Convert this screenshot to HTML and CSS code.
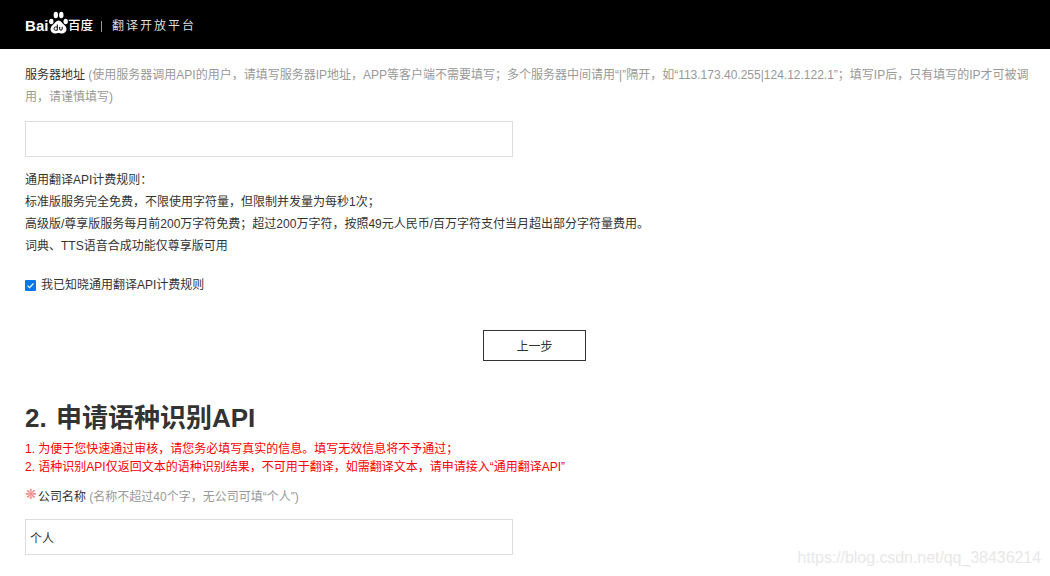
FILE: index.html

```html
<!DOCTYPE html>
<html>
<head>
  <title>百度翻译开放平台</title>
  <link rel="stylesheet" href="styles.css">
</head>
<body>
  <div class="header">
    <div class="logo">
      <span class="logo-bai">Bai</span>
      <svg class="logo-paw" width="19" height="23" viewBox="0 0 19 23">
        <ellipse cx="2.300" cy="10.500" rx="2.200" ry="2.800" fill="#fff"/>
        <ellipse cx="6.800" cy="4" rx="2.200" ry="3.200" fill="#fff"/>
        <ellipse cx="12.300" cy="4" rx="2.200" ry="3.200" fill="#fff"/>
        <ellipse cx="16.700" cy="10.500" rx="2.200" ry="2.800" fill="#fff"/>
        <path d="M9.500 9.500c-2.500 0-3 2.300-5 3.800C2.300 14.900 1.500 16.500 1.500 18.300c0 2.700 2.200 4.200 4.500 4.200 1.500 0 2.300-.5 3.500-.5s2 .5 3.500.5c2.300 0 4.500-1.500 4.500-4.200 0-1.800-.8-3.400-3-5-2-1.500-2.500-3.800-5-3.800z" fill="#fff"/>
        <path d="M8.300 13.500v5.700H6.500c-1 0-1.500-.7-1.500-1.600s.6-1.600 1.500-1.600h1.800M10.700 15.800v2.200c0 .8.500 1.200 1.200 1.200s1.300-.4 1.300-1.200v-2.200" fill="none" stroke="#000" stroke-width="1"/>
      </svg>
      <span class="logo-du">百度</span>
      <span class="logo-line"></span>
      <span class="logo-name">翻译开放平台</span>
    </div>
  </div>

  <div class="content">
    <p class="field-label">服务器地址 <span class="hint">(使用服务器调用API的用户，请填写服务器IP地址，APP等客户端不需要填写；多个服务器中间请用“|”隔开，如“113.173.40.255|124.12.122.1”；填写IP后，只有填写的IP才可被调用，请谨慎填写)</span></p>
    <input class="text-input server-input" type="text">

    <div class="rules">
      <div>通用翻译API计费规则：</div>
      <div>标准版服务完全免费，不限使用字符量，但限制并发量为每秒1次；</div>
      <div>高级版/尊享版服务每月前200万字符免费；超过200万字符，按照49元人民币/百万字符支付当月超出部分字符量费用。</div>
      <div>词典、TTS语音合成功能仅尊享版可用</div>
    </div>

    <label class="agree">
      <span class="check">
        <svg width="11" height="11" viewBox="0 0 11 11"><path d="M2.500 5.700l2 2 4-4.200" fill="none" stroke="#fff" stroke-width="1.200"/></svg>
      </span>
      我已知晓通用翻译API计费规则
    </label>

    <div class="actions">
      <button class="btn" type="button">上一步</button>
    </div>

    <h2 class="section-title">2. 申请语种识别API</h2>
    <div class="notice">
      <div>1. 为便于您快速通过审核，请您务必填写真实的信息。填写无效信息将不予通过；</div>
      <div>2. 语种识别API仅返回文本的语种识别结果，不可用于翻译，如需翻译文本，请申请接入“通用翻译API”</div>
    </div>

    <p class="field-label company-label"><span class="star">❋</span>公司名称 <span class="hint">(名称不超过40个字，无公司可填“个人”)</span></p>
    <input class="text-input company-input" type="text" value="个人">
  </div>

  <div class="watermark">https://blog.csdn.net/qq_38436214</div>
</body>
</html>
```

FILE: styles.css

```css
html, body {
  height: 576px;
  overflow: hidden;
}
body {
  margin: 0;
  background: #fff;
  color: #333;
  font-family: "Liberation Sans", "Noto Sans CJK SC", sans-serif;
  font-size: 12px;
  line-height: 22px;
}
.header {
  height: 49px;
  box-sizing: border-box;
  padding: 3px 0 0 25px;
  background: #000;
  display: flex;
  align-items: center;
}
.logo {
  display: flex;
  align-items: center;
  color: #fff;
}
.logo-bai {
  font-size: 15px;
  font-weight: bold;
  letter-spacing: .1px;
  width: 24px;
}
.logo-paw {
  margin-top: -8px;
}
.logo-du {
  font-size: 12.500px;
  font-weight: 500;
}
.logo-line {
  width: 1px;
  height: 11px;
  background: #999;
  margin: 0 10px 0 8px;
}
.logo-name {
  font-size: 12px;
  letter-spacing: 2px;
  color: #ddd;
}
.content {
  padding: 15px 15px 0 25px;
}
.field-label {
  margin: 0;
}
.hint {
  color: #999;
}
.text-input {
  display: block;
  box-sizing: border-box;
  width: 488px;
  height: 36px;
  border: 1px solid #ddd;
  padding: 0 4px;
  color: #333;
  font-family: inherit;
  font-size: 12px;
  outline: none;
}
.server-input {
  margin-top: 13px;
}
.rules {
  margin-top: 12px;
}
.agree {
  display: flex;
  align-items: center;
  gap: 5px;
  margin-top: 17px;
}
.check {
  width: 11px;
  height: 11px;
  background: #0a76e8;
  border-radius: 1px;
  display: flex;
}
.actions {
  display: flex;
  justify-content: center;
  margin-top: 34px;
}
.btn {
  width: 103px;
  height: 31px;
  margin-left: 9px;
  background: #fff;
  border: 1px solid #333;
  color: #333;
  font-family: inherit;
  font-size: 12px;
  padding: 0;
}
.section-title {
  margin: 39px 0 0;
  font-size: 26px;
  line-height: 36px;
  font-weight: bold;
  word-spacing: 2px;
}
.notice {
  margin-top: 4px;
  color: #f00;
  line-height: 18px;
}
.company-label {
  margin-top: 10px;
}
.star {
  display: inline-block;
  width: 13px;
  color: #f08a8a;
  font-size: 14px;
  line-height: 1;
  vertical-align: 2px;
}
.company-input {
  margin-top: 11px;
}
.watermark {
  position: absolute;
  right: 9px;
  top: 548px;
  color: #e8e8e8;
  font-size: 16px;
  line-height: 20px;
  letter-spacing: -.06px;
}
```
